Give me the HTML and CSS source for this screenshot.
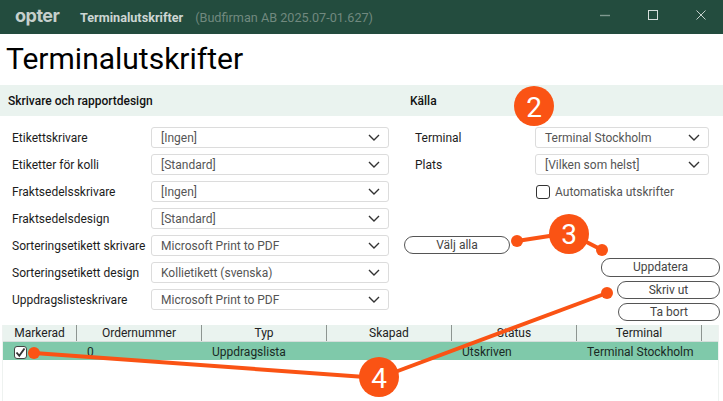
FILE: index.html
```html
<!DOCTYPE html>
<html lang="sv">
<head>
<meta charset="utf-8">
<title>Terminalutskrifter</title>
<link rel="stylesheet" href="styles.css">
</head>
<body>
<div class="app">
  <header class="titlebar">
    <span class="logo">opter</span>
    <span class="win-title">Terminalutskrifter</span>
    <span class="win-sub">(Budfirman AB 2025.07-01.627)</span>
    <div class="win-controls">
      <svg class="wc" width="12" height="12" viewBox="0 0 12 12"><path d="M1 6.5H11" stroke="#7f9990" stroke-width="1.4" fill="none"/></svg>
      <svg class="wc" width="12" height="12" viewBox="0 0 12 12"><rect x="1.5" y="1.5" width="9" height="9" stroke="#d5dedb" stroke-width="1" fill="none"/></svg>
      <svg class="wc" width="12" height="12" viewBox="0 0 12 12"><path d="M1.5 1.5L10.5 10.5M10.5 1.5L1.5 10.5" stroke="#c4d0cc" stroke-width="1" fill="none"/></svg>
    </div>
  </header>

  <h1 class="page-title">Terminalutskrifter</h1>

  <div class="columns">
    <section class="col col-left">
      <h2 class="band">Skrivare och rapportdesign</h2>
      <div class="form">
        <label class="lbl">Etikettskrivare</label>
        <div class="select"><span>[Ingen]</span><svg class="chev" viewBox="0 0 12 7"><path d="M1 1L6 6L11 1"/></svg></div>
        <label class="lbl">Etiketter för kolli</label>
        <div class="select"><span>[Standard]</span><svg class="chev" viewBox="0 0 12 7"><path d="M1 1L6 6L11 1"/></svg></div>
        <label class="lbl">Fraktsedelsskrivare</label>
        <div class="select"><span>[Ingen]</span><svg class="chev" viewBox="0 0 12 7"><path d="M1 1L6 6L11 1"/></svg></div>
        <label class="lbl">Fraktsedelsdesign</label>
        <div class="select"><span>[Standard]</span><svg class="chev" viewBox="0 0 12 7"><path d="M1 1L6 6L11 1"/></svg></div>
        <label class="lbl">Sorteringsetikett skrivare</label>
        <div class="select"><span>Microsoft Print to PDF</span><svg class="chev" viewBox="0 0 12 7"><path d="M1 1L6 6L11 1"/></svg></div>
        <label class="lbl">Sorteringsetikett design</label>
        <div class="select"><span>Kollietikett (svenska)</span><svg class="chev" viewBox="0 0 12 7"><path d="M1 1L6 6L11 1"/></svg></div>
        <label class="lbl">Uppdragslisteskrivare</label>
        <div class="select"><span>Microsoft Print to PDF</span><svg class="chev" viewBox="0 0 12 7"><path d="M1 1L6 6L11 1"/></svg></div>
      </div>
    </section>

    <section class="col col-right">
      <h2 class="band band-right">Källa</h2>
      <div class="form form-right">
        <label class="lbl">Terminal</label>
        <div class="select"><span>Terminal Stockholm</span><svg class="chev" viewBox="0 0 12 7"><path d="M1 1L6 6L11 1"/></svg></div>
        <label class="lbl">Plats</label>
        <div class="select"><span>[Vilken som helst]</span><svg class="chev" viewBox="0 0 12 7"><path d="M1 1L6 6L11 1"/></svg></div>
        <span></span>
        <div class="auto"><span class="box"></span><span>Automatiska utskrifter</span></div>
      </div>
      <button class="btn btn-all">Välj alla</button>
      <div class="actions">
        <button class="btn btn-update">Uppdatera</button>
        <button class="btn btn-print">Skriv ut</button>
        <button class="btn btn-delete">Ta bort</button>
      </div>
    </section>
  </div>

  <div class="table">
    <div class="thead">
      <div class="th">Markerad</div>
      <div class="th">Ordernummer</div>
      <div class="th">Typ</div>
      <div class="th">Skapad</div>
      <div class="th">Status</div>
      <div class="th">Terminal</div>
    </div>
    <div class="trow">
      <div class="td td-check"><span class="box box-checked"><svg width="11" height="11" viewBox="0 0 11 11"><path d="M1.5 5.5L4.3 8.8L9.5 1.5" fill="none" stroke="#333" stroke-width="1.9"/></svg></span></div>
      <div class="td">0</div>
      <div class="td">Uppdragslista</div>
      <div class="td"></div>
      <div class="td">Utskriven</div>
      <div class="td">Terminal Stockholm</div>
    </div>
  </div>

  <svg class="overlay" width="723" height="401" viewBox="0 0 723 401">
    <g stroke="#fa5314" stroke-width="4" fill="none">
      <line x1="517" y1="241" x2="569" y2="233"/>
      <line x1="569" y1="233" x2="602" y2="250"/>
      <line x1="34" y1="353" x2="379" y2="378"/>
      <line x1="379" y1="378" x2="607" y2="293"/>
    </g>
    <g fill="#fa5314">
      <circle cx="517" cy="241" r="6"/>
      <circle cx="602" cy="250" r="6"/>
      <circle cx="607" cy="293" r="6"/>
      <circle cx="34" cy="353" r="6"/>
      <circle cx="534" cy="106" r="20"/>
      <circle cx="569" cy="234" r="20"/>
      <circle cx="379" cy="377" r="20"/>
    </g>
    <g class="num">
      <text x="534" y="117">2</text>
      <text x="569" y="244">3</text>
      <text x="379" y="388">4</text>
    </g>
  </svg>
</div>
</body>
</html>
```

FILE: styles.css
```css
* { box-sizing: border-box; }
html, body { margin: 0; padding: 0; }
body {
  background: #fff;
  font-family: Roboto, "Liberation Sans", sans-serif;
  font-size: 12px;
  color: #1a1a1a;
  overflow: hidden;
}
.app { position: relative; width: 723px; height: 401px; overflow: hidden; }

.titlebar {
  height: 34px;
  background: #234c3e;
  display: flex;
  align-items: center;
}
.logo {
  margin-left: 15px;
  width: 65px;
  font-family: Inter, sans-serif;
  font-weight: 700;
  font-size: 18px;
  letter-spacing: -0.5px;
  color: #c6d0cc;
  line-height: 30px;
  padding-bottom: 3px;
}
.win-title { font-weight: 700; font-size: 12.67px; color: #cdd6d3; }
.win-sub { margin-left: 12px; font-size: 12.67px; color: #71897f; }
.win-controls { margin-left: auto; display: flex; gap: 36px; padding: 0 16px 4px 0; }
.wc { display: block; }

.page-title {
  margin: 0;
  height: 51px;
  padding-left: 6px;
  font-weight: 400;
  font-size: 30px;
  line-height: 50px;
  color: #000;
}

.columns { display: grid; grid-template-columns: 400px 323px; height: 240px; }
.band {
  margin: 0;
  height: 31px;
  background: #eaf3ef;
  font-weight: 500;
  font-size: 12px;
  line-height: 33px;
  padding-left: 8px;
  color: #111;
}
.band-right { padding-left: 10px; }

.form {
  display: grid;
  grid-template-columns: 139px 238px;
  grid-auto-rows: 21px;
  row-gap: 6px;
  padding: 11px 0 0 12px;
  align-items: center;
}
.form-right {
  grid-template-columns: 120px 174px;
  padding-left: 15px;
}
.lbl { font-size: 12px; color: #1c1c1c; white-space: nowrap; }
.select {
  height: 21px;
  border: 1px solid #dcdcdc;
  border-radius: 3px;
  background: #fff;
  display: flex;
  align-items: center;
  justify-content: space-between;
  padding: 0 8px 0 9px;
  color: #555;
  font-size: 12px;
}
.chev { width: 12px; height: 7px; display: block; }
.chev path { fill: none; stroke: #333; stroke-width: 1.4; }

.auto {
  display: flex;
  align-items: center;
  gap: 5px;
  color: #555;
  font-size: 12px;
  padding-left: 1px;
}
.box {
  width: 14px;
  height: 14px;
  border: 1px solid #333;
  border-radius: 3px;
  background: #fff;
  display: inline-flex;
  align-items: center;
  justify-content: center;
  flex: none;
}
.box-checked { border-color: #444; }

.btn {
  display: block;
  height: 18px;
  padding: 0;
  border: 1px solid #555;
  border-radius: 9px;
  background: #fff;
  font-family: inherit;
  font-size: 12px;
  line-height: 15px;
  color: #444;
}
.btn-all { width: 106px; margin: 34px 0 0 4px; }
.actions {
  display: flex;
  flex-direction: column;
  align-items: flex-end;
  gap: 4px;
  padding-right: 3px;
  margin-top: 4px;
}
.btn-update { width: 119px; height: 19px; }
.btn-print { width: 103px; }
.btn-delete { width: 102px; }

.table {
  margin-left: 2px;
  width: 717px;
  height: 76px;
  border-left: 1px solid #eef2f0;
  border-right: 1px solid #eef2f0;
}
.thead, .trow {
  display: grid;
  grid-template-columns: 74px 125px 125px 125px 125px 125px 1fr;
}
.thead {
  height: 17px;
  background: #eaf3ef;
  border-bottom: 1px solid #d5dedb;
}
.th {
  height: 16px;
  border-right: 1px solid #8d9591;
  text-align: center;
  font-size: 12px;
  line-height: 16px;
  color: #222;
}
.trow {
  height: 18px;
  background: #7fc9aa;
}
.td {
  padding-left: 10px;
  font-size: 12px;
  line-height: 20px;
  color: #1a2a24;
  white-space: nowrap;
}
.td-check { display: flex; align-items: center; padding-left: 11px; }
.td-check .box { width: 13px; height: 13px; }

.overlay { position: absolute; left: 0; top: 0; pointer-events: none; }
.num text {
  font-family: Roboto, sans-serif;
  font-size: 28px;
  fill: #fff;
  text-anchor: middle;
}
```
